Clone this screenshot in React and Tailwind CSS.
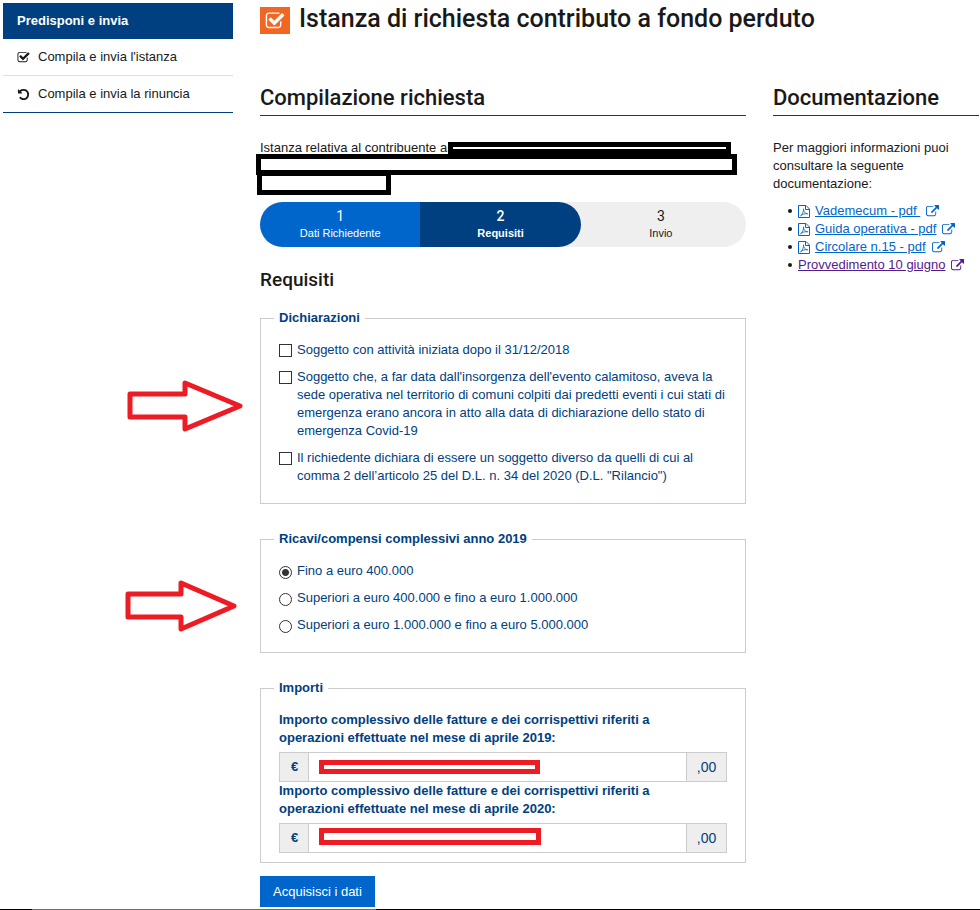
import React from 'react';

const CHECK_SQUARE =
  'M1472 930v318q0 119-84.5 203.5t-203.5 84.5h-832q-119 0-203.5-84.5t-84.5-203.5v-832q0-119 84.5-203.5t203.5-84.5h832q63 0 117 25 15 7 18 23 3 17-9 29l-49 49q-10 10-23 10-3 0-9-2-23-6-45-6h-832q-66 0-113 47t-47 113v832q0 66 47 113t113 47h832q66 0 113-47t47-113v-254q0-13 9-22l64-64q10-10 23-10 6 0 12 3 20 8 20 29zm231-489l-814 814q-24 24-57 24t-57-24l-430-430q-24-24-24-57t24-57l110-110q24-24 57-24t57 24l263 263 647-647q24-24 57-24t57 24l110 110q24 24 24 57t-24 57z';
const UNDO =
  'M1664 896q0 156-61 298t-164 245-245 164-298 61q-172 0-327-72.5t-264-204.5q-7-10-6.5-22.5t8.5-20.5l137-138q10-9 25-9 16 2 23 12 73 95 179 147t225 52q104 0 198.5-40.5t163.5-109.5 109.5-163.5 40.5-198.5-40.5-198.5-109.5-163.5-163.5-109.5-198.5-40.5q-98 0-188 35.5t-160 101.5l137 138q31 30 14 69-17 40-59 40h-448q-26 0-45-19t-19-45v-448q0-42 40-59 39-17 69 14l130 129q107-101 244.5-156.5t284.5-55.5q156 0 298 61t245 164 164 245 61 298z';
const EXTERNAL_LINK =
  'M1408 928v320q0 119-84.5 203.5t-203.5 84.5h-832q-119 0-203.5-84.5t-84.5-203.5v-832q0-119 84.5-203.5t203.5-84.5h704q14 0 23 9t9 23v64q0 14-9 23t-23 9h-704q-66 0-113 47t-47 113v832q0 66 47 113t113 47h832q66 0 113-47t47-113v-320q0-14 9-23t23-9h64q14 0 23 9t9 23zm384-864v512q0 26-19 45t-45 19-45-19l-176-176-652 652q-10 10-23 10t-23-10l-114-114q-10-10-10-23t10-23l652-652-176-176q-19-19-19-45t19-45 45-19h512q26 0 45 19t19 45z';

const Icon = ({ path, className }) => (
  <svg viewBox="0 0 1792 1792" fill="currentColor" aria-hidden="true" className={className}>
    <path d={path} />
  </svg>
);

const PdfIcon = ({ className }) => (
  <svg viewBox="0 0 12 13" fill="none" stroke="currentColor" aria-hidden="true" className={className}>
    <path d="M.5.5H8L11.5 4V12.5H.5ZM7.5.5V4.5H11.5" />
    <path d="M2.5 10.8C4.4 9.6 5.8 6.6 5.5 3.8C5.4 6.8 7 8.6 9.8 8.8C7 8.5 4.5 9 2.5 10.8Z" strokeWidth=".8" />
  </svg>
);

const menu = [
  { label: "Compila e invia l'istanza", icon: CHECK_SQUARE },
  { label: 'Compila e invia la rinuncia', icon: UNDO },
];

const documents = [
  { label: 'Vademecum - pdf\u00a0', pdf: true },
  { label: 'Guida operativa - pdf', pdf: true },
  { label: 'Circolare n.15 - pdf', pdf: true },
  { label: 'Provvedimento 10 giugno', visited: true },
];

const declarations = [
  'Soggetto con attività iniziata dopo il 31/12/2018',
  "Soggetto che, a far data dall'insorgenza dell'evento calamitoso, aveva la sede operativa nel territorio di comuni colpiti dai predetti eventi i cui stati di emergenza erano ancora in atto alla data di dichiarazione dello stato di emergenza Covid-19",
  'Il richiedente dichiara di essere un soggetto diverso da quelli di cui al comma 2 dell’articolo 25 del D.L. n. 34 del 2020 (D.L. "Rilancio")',
];

const revenues = [
  'Fino a euro 400.000',
  'Superiori a euro 400.000 e fino a euro 1.000.000',
  'Superiori a euro 1.000.000 e fino a euro 5.000.000',
];

const Heading = ({ children }) => (
  <h2 className="border-b border-[#004080] pb-[3px] font-[Roboto,sans-serif] text-[22px] leading-7 font-medium">
    {children}
  </h2>
);

const Fieldset = ({ legend, children, className = 'pb-[18px]' }) => (
  <fieldset className={`relative border border-[#ccc] px-[13px] ${className}`}>
    <legend className="px-[5px] font-bold">{legend}</legend>
    <div className="px-[5px] pt-[14px]">{children}</div>
  </fieldset>
);

const Arrow = ({ className, d }) => (
  <svg viewBox="0 0 116 52" fill="none" aria-hidden="true" className={`absolute h-[52px] w-[116px] ${className}`}>
    <path d={d} stroke="#ed1c24" strokeWidth="5" strokeLinejoin="round" />
  </svg>
);

const Amount = ({ id, label, mark }) => (
  <div>
    <label htmlFor={id} className="mb-[5px] block pr-12 font-bold">{label}</label>
    <div className="relative flex h-[30px] border border-[#ccc]">
      <span className="flex w-7 items-center justify-center bg-[#eee] pl-px font-bold">€</span>
      <input id={id} type="text" className="min-w-0 flex-1 border-x border-[#ccc] bg-white px-2 outline-none" />
      <span className="flex w-[39px] items-center justify-center bg-[#eee] text-sm">,00</span>
      <span className={`absolute left-[39px] border-5 border-[#ed1c24] bg-white ${mark}`} />
    </div>
  </div>
);

export default function App() {
  return (
    <div className="bg-white font-['Liberation_Sans',Arial,sans-serif] text-[13px] leading-[18px] text-[#19191a]">
      <div className="flex gap-[27px] pt-[3px] pr-px pb-0.5 pl-[3px]">
        <nav className="w-[230px] shrink-0 self-start border-b border-[#004080]">
          <div className="flex h-9 items-center bg-[#004080] px-[14px] font-bold text-white">Predisponi e invia</div>
          <ul className="divide-y divide-[#ddd]">
            {menu.map((item) => (
              <li key={item.label}>
                <a href="#" className="flex h-9 items-center gap-2 px-[14px]">
                  <Icon path={item.icon} className="size-[13px]" />
                  {item.label}
                </a>
              </li>
            ))}
          </ul>
        </nav>

        <div className="min-w-0 flex-1">
          <h1 className="flex items-center gap-[9px] font-[Roboto,sans-serif] text-[25px] leading-8 font-medium">
            <span className="mt-[3px] flex h-[27px] w-[30px] shrink-0 items-center justify-center bg-[#f26522] text-white">
              <Icon path={CHECK_SQUARE} className="size-5" />
            </span>
            Istanza di richiesta contributo a fondo perduto
          </h1>

          <div className="mt-[49px] grid grid-cols-[minmax(0,1fr)_206px] gap-[27px]">
            <main>
              <Heading>Compilazione richiesta</Heading>

              <p className="relative mt-[23px] h-[54px]">
                Istanza relativa al contribuente a
                <span className="absolute top-[3px] left-[188px] h-3 w-[283px] border-5 border-black bg-white" />
                <span className="absolute top-8 -left-[3px] h-6 w-[134px] border-5 border-black bg-white" />
                <span className="absolute top-[15px] -left-1 h-[21px] w-[481px] border-5 border-black bg-white" />
              </p>

              <ol className="mt-[9px] grid h-[45px] grid-cols-[33fr_33fr_34fr] overflow-hidden rounded-full bg-[#efefef] text-center text-[11px] leading-4">
                <li className="bg-[#0066cc] pt-[5px] text-white">
                  <span className="block font-[Roboto,sans-serif] text-sm leading-[18px]">1</span>
                  Dati Richiedente
                </li>
                <li className="rounded-r-full bg-[#004080] pt-[5px] font-bold text-white">
                  <span className="block font-[Roboto,sans-serif] text-sm leading-[18px] font-medium">2</span>
                  Requisiti
                </li>
                <li className="pt-[5px] pr-[5px]">
                  <span className="block font-[Roboto,sans-serif] text-sm leading-[18px]">3</span>
                  Invio
                </li>
              </ol>

              <h3 className="mt-[21px] font-[Roboto,sans-serif] text-[19px] leading-6 font-medium">Requisiti</h3>

              <form className="mt-[17px] text-[#004080]">
                <div className="space-y-[26px]">
                  <Fieldset legend="Dichiarazioni">
                    <Arrow className="top-[53px] -left-[134px]" d="M3 14H58V3L113 26L58 49V37H3Z" />
                    <div className="space-y-[9px]">
                      {declarations.map((text) => (
                        <label key={text} className="flex items-start gap-[5px]">
                          <input type="checkbox" className="mt-[3px] size-[13px] shrink-0 appearance-none border border-[#333] bg-white checked:bg-[#333]" />
                          <span>{text}</span>
                        </label>
                      ))}
                    </div>
                  </Fieldset>

                  <Fieldset legend="Ricavi/compensi complessivi anno 2019">
                    <Arrow className="top-[32px] -left-[136px]" d="M3 14H56V3L109 26L56 49V37H3Z" />
                    <div className="space-y-[9px]">
                      {revenues.map((text, i) => (
                        <label key={text} className="flex items-start gap-[5px]">
                          <input
                            type="radio"
                            name="ricavi"
                            defaultChecked={i === 0}
                            className="mt-1 size-[13px] shrink-0 appearance-none rounded-full border border-[#333] bg-white checked:bg-[radial-gradient(circle,#333_0_3px,#fff_4px)]"
                          />
                          <span>{text}</span>
                        </label>
                      ))}
                    </div>
                  </Fieldset>

                  <Fieldset legend="Importi" className="pb-[9px]">
                    <Amount
                      id="aprile2019"
                      label="Importo complessivo delle fatture e dei corrispettivi riferiti a operazioni effettuate nel mese di aprile 2019:"
                      mark="top-[7px] h-[14px] w-[221px]"
                    />
                    <Amount
                      id="aprile2020"
                      label="Importo complessivo delle fatture e dei corrispettivi riferiti a operazioni effettuate nel mese di aprile 2020:"
                      mark="top-1 h-[17px] w-[222px]"
                    />
                  </Fieldset>
                </div>

                <button type="button" className="mt-[13px] block h-[31px] bg-[#0066cc] px-[13px] text-white">
                  Acquisisci i dati
                </button>
              </form>
            </main>

            <aside>
              <Heading>Documentazione</Heading>
              <p className="mt-[23px]">Per maggiori informazioni puoi consultare la seguente documentazione:</p>
              <ul className="mt-[9px] pl-[15px]">
                {documents.map((doc) => (
                  <li
                    key={doc.label}
                    className="flex items-center whitespace-nowrap before:mr-[6px] before:size-1 before:rounded-full before:bg-[#19191a]"
                  >
                    <a
                      href="#"
                      className={`flex items-center ${doc.visited ? 'text-[#551a8b]' : 'text-[#0066cc]'}`}
                    >
                      {doc.pdf && <PdfIcon className="mr-[5px] h-[13px] w-3" />}
                      <span className="underline">{doc.label}</span>
                      <Icon path={EXTERNAL_LINK} className="ml-[6px] size-[13px]" />
                    </a>
                  </li>
                ))}
              </ul>
            </aside>
          </div>
        </div>
      </div>

      <div className="flex h-px bg-black">
        <span className="ml-8 w-[344px] bg-[#6b6b6b]" />
      </div>
    </div>
  );
}
